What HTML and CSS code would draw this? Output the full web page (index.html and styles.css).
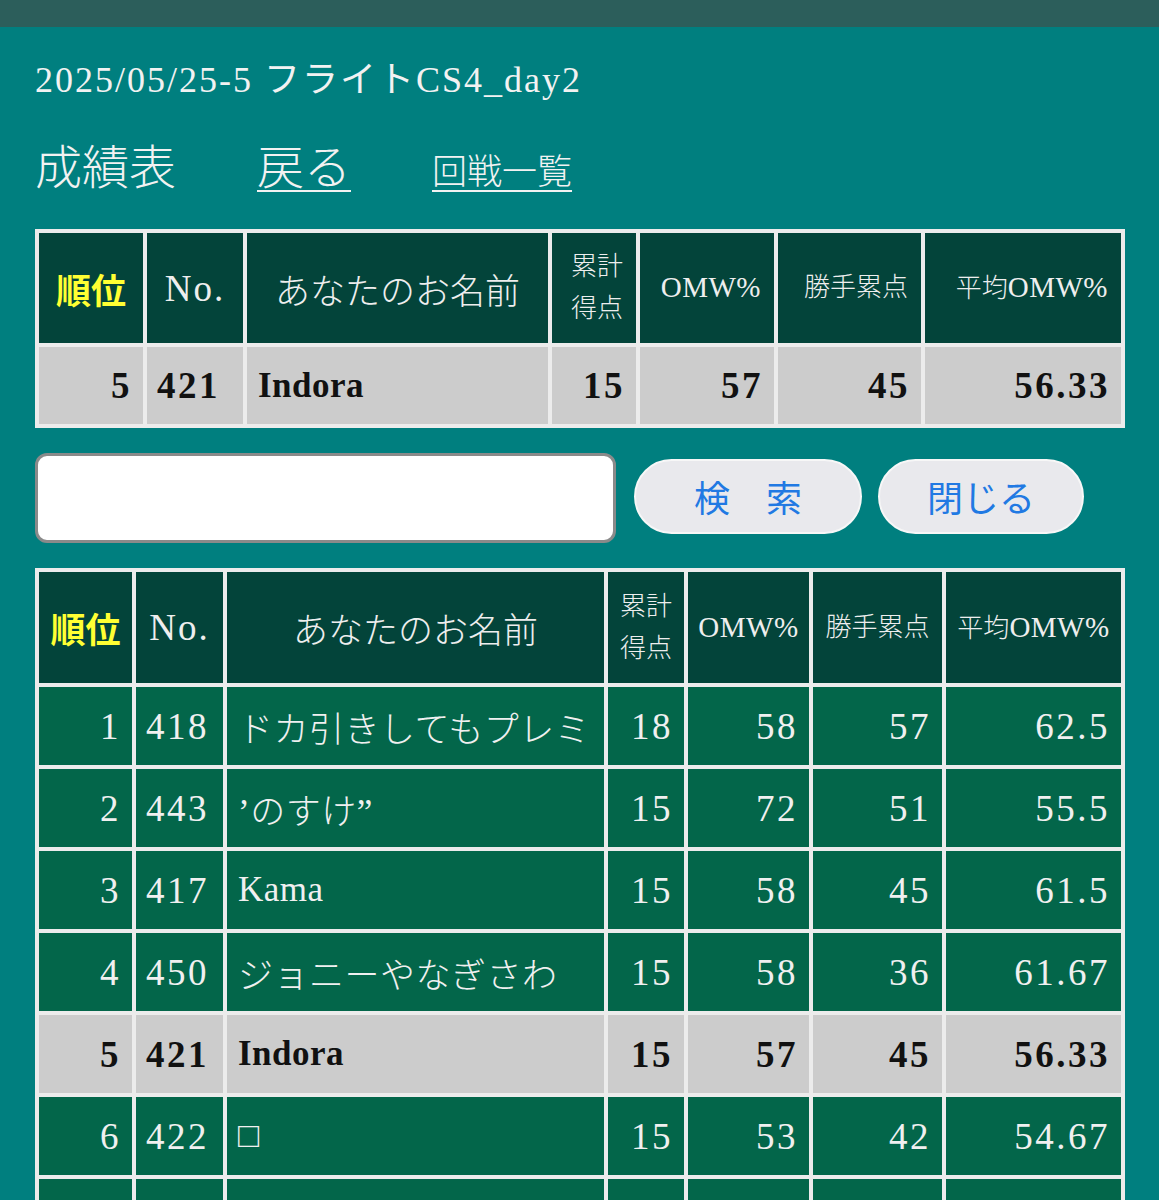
FILE: index.html
```html
<!DOCTYPE html>
<html lang="ja">
<head>
<meta charset="utf-8">
<title>成績表</title>
<link rel="stylesheet" href="styles.css">
</head>
<body>
<div class="topbar"></div>
<main class="page">
  <h1 class="title">2025/05/25-5 フライトCS4_day2</h1>
  <nav class="nav">
    <span class="nav-title">成績表</span>
    <a class="nav-back" href="#">戻る</a>
    <a class="nav-rounds" href="#">回戦一覧</a>
  </nav>

  <table class="score mine">
    <colgroup>
      <col class="m1"><col class="m2"><col class="m3"><col class="m4"><col class="m5"><col class="m6"><col class="m7">
    </colgroup>
    <thead>
      <tr>
        <th class="rank-h">順位</th>
        <th class="big no-h">No.</th>
        <th class="big">あなたのお名前</th>
        <th class="small r">累計<br>得点</th>
        <th class="small r"><span class="lat">OMW%</span></th>
        <th class="small r">勝手累点</th>
        <th class="small r">平均<span class="lat">OMW%</span></th>
      </tr>
    </thead>
    <tbody>
      <tr class="me">
        <td class="num">5</td><td class="no">421</td><td class="name">Indora</td><td class="num">15</td><td class="num">57</td><td class="num">45</td><td class="num">56.33</td>
      </tr>
    </tbody>
  </table>

  <form class="search" onsubmit="return false">
    <input class="search-input" type="text" aria-label="検索">
    <button class="btn btn-search" type="button">検　索</button>
    <button class="btn btn-close" type="button">閉じる</button>
  </form>

  <table class="score all">
    <colgroup>
      <col class="a1"><col class="a2"><col class="a3"><col class="a4"><col class="a5"><col class="a6"><col class="a7">
    </colgroup>
    <thead>
      <tr>
        <th class="rank-h">順位</th>
        <th class="big no-h">No.</th>
        <th class="big">あなたのお名前</th>
        <th class="small">累計<br>得点</th>
        <th class="small"><span class="lat">OMW%</span></th>
        <th class="small">勝手累点</th>
        <th class="small">平均<span class="lat">OMW%</span></th>
      </tr>
    </thead>
    <tbody>
      <tr><td class="num">1</td><td class="no">418</td><td class="name">ドカ引きしてもプレミ</td><td class="num">18</td><td class="num">58</td><td class="num">57</td><td class="num">62.5</td></tr>
      <tr><td class="num">2</td><td class="no">443</td><td class="name">’のすけ”</td><td class="num">15</td><td class="num">72</td><td class="num">51</td><td class="num">55.5</td></tr>
      <tr><td class="num">3</td><td class="no">417</td><td class="name">Kama</td><td class="num">15</td><td class="num">58</td><td class="num">45</td><td class="num">61.5</td></tr>
      <tr><td class="num">4</td><td class="no">450</td><td class="name">ジョニーやなぎさわ</td><td class="num">15</td><td class="num">58</td><td class="num">36</td><td class="num">61.67</td></tr>
      <tr class="me"><td class="num">5</td><td class="no">421</td><td class="name">Indora</td><td class="num">15</td><td class="num">57</td><td class="num">45</td><td class="num">56.33</td></tr>
      <tr><td class="num">6</td><td class="no">422</td><td class="name">□</td><td class="num">15</td><td class="num">53</td><td class="num">42</td><td class="num">54.67</td></tr>
      <tr><td class="num">&nbsp;</td><td class="no">&nbsp;</td><td class="name">&nbsp;</td><td class="num">&nbsp;</td><td class="num">&nbsp;</td><td class="num">&nbsp;</td><td class="num">&nbsp;</td></tr>
    </tbody>
  </table>
</main>
</body>
</html>
```

FILE: styles.css
```css
* {
  box-sizing: border-box;
}

html, body {
  margin: 0;
  padding: 0;
  background: #007f7f;
}

body {
  font-family: "Liberation Serif", "Noto Sans CJK JP", serif;
  color: #f2f2f2;
}

.topbar {
  height: 27px;
  background: #2c5e5b;
}

.page {
  padding: 0 34px 40px 35px;
}

.title {
  margin: 30px 0 0;
  font-size: 36px;
  line-height: 46px;
  font-weight: normal;
  letter-spacing: 2px;
  color: #f2f2f2;
}

.nav {
  display: flex;
  align-items: baseline;
  gap: 81px;
  margin-top: 35px;
  height: 60px;
  line-height: 60px;
  font-weight: 300;
}

.nav-title {
  font-size: 47px;
}

.nav-back {
  font-size: 47px;
  color: #f2f2f2;
  text-decoration: underline;
  text-decoration-thickness: 2px;
  text-underline-offset: 6px;
}

.nav-rounds {
  font-size: 35px;
  color: #f2f2f2;
  text-decoration: underline;
  text-decoration-thickness: 2px;
  text-underline-offset: 6px;
}

.score {
  width: 1090px;
  table-layout: fixed;
  border-collapse: separate;
  border-spacing: 4px;
  background: #ececec;
}

.mine {
  margin-top: 31px;
}

.all {
  margin-top: 25px;
}

.m1 { width: 104px; }
.m2 { width: 96px; }
.m3 { width: 301px; }
.m4 { width: 84px; }
.m5 { width: 134px; }
.m6 { width: 143px; }
.m7 { width: 196px; }

.a1 { width: 93px; }
.a2 { width: 87px; }
.a3 { width: 377px; }
.a4 { width: 76px; }
.a5 { width: 121px; }
.a6 { width: 129px; }
.a7 { width: 175px; }

.score th {
  background: #03443a;
  color: #eeeeee;
  font-weight: 300;
  text-align: center;
  vertical-align: middle;
  padding: 0;
  white-space: nowrap;
}

.mine thead tr {
  height: 110px;
}

.all thead tr {
  height: 111px;
}

.score th.big {
  font-size: 35px;
}

.score th.no-h {
  font-size: 37px;
  letter-spacing: 2px;
}

.score th.rank-h {
  font-size: 35px;
  color: #ffff33;
  font-weight: bold;
}

.score th.small {
  font-size: 26px;
  line-height: 42px;
}

.score th .lat {
  font-size: 29px;
  letter-spacing: 0.5px;
}

.score th.r {
  text-align: right;
  padding-right: 13px;
}

.score td {
  background: #03664a;
  color: #f0f0f0;
  font-size: 37px;
  font-weight: 300;
  letter-spacing: 2.5px;
  vertical-align: middle;
  white-space: nowrap;
  overflow: hidden;
  padding: 0 12px;
}

.mine tbody tr {
  height: 77px;
}

.all tbody tr {
  height: 78px;
}

.score td.num {
  text-align: right;
  padding-right: 11px;
}

.score td.no {
  text-align: left;
  padding-left: 10px;
  padding-right: 0;
}

.score td.name {
  text-align: left;
  padding-left: 11px;
  font-size: 35px;
  letter-spacing: 0.5px;
}

.score tr.me td {
  background: #cccccc;
  color: #111111;
  font-weight: bold;
}

.search {
  display: flex;
  align-items: center;
  margin-top: 25px;
  height: 90px;
}

.search-input {
  width: 581px;
  height: 90px;
  border: 3px solid #8a8a8a;
  border-radius: 12px;
  background: #ffffff;
  margin: 0 18px 0 0;
  padding: 0 12px;
  font-size: 32px;
}

.btn {
  height: 75px;
  margin-top: -4px;
  border: 2px solid #f7f7f7;
  border-radius: 38px;
  background: #e9e9ed;
  color: #2179e3;
  font-family: "Noto Sans CJK JP", sans-serif;
  font-size: 36px;
  line-height: 1;
  padding: 0;
}

.btn-search {
  width: 228px;
  margin-right: 16px;
}

.btn-close {
  width: 206px;
}
```
